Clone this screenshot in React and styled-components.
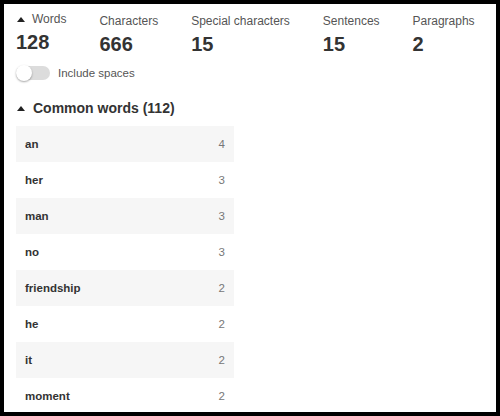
import React from "react";
import styled, { createGlobalStyle } from "styled-components";

const GlobalStyle = createGlobalStyle`
  html, body {
    margin: 0;
    padding: 0;
    background: #000;
  }
  body {
    font-family: "Liberation Sans", Arial, sans-serif;
  }
`

const Frame = styled.div`
  box-sizing: border-box;
  width: 500px;
  height: 416px;
  border: 4px solid #000;
  background: #fff;
  overflow: hidden;
  padding: 9px 12px 0 12px;
  color: #333;
`

const Stats = styled.div`
  display: flex;
  gap: 33px;
`

const Stat = styled.div`
  display: flex;
  flex-direction: column;
  margin-top: ${props => (props.raised ? "-2px" : "0")};
`

const StatLabel = styled.div`
  display: flex;
  align-items: center;
  gap: 7px;
  font-size: 12px;
  line-height: 16px;
  color: #555;
  padding-left: ${props => (props.indent ? "1px" : "0")};
`

const StatValue = styled.div`
  font-size: 20px;
  font-weight: 700;
  line-height: 24px;
  margin-top: 3px;
  color: #333;
`

const ToggleRow = styled.label`
  display: flex;
  align-items: center;
  gap: 8px;
  margin-top: 10px;
  font-size: 11.5px;
  color: #555;
`

const Track = styled.span`
  position: relative;
  display: inline-block;
  width: 34px;
  height: 14px;
  border-radius: 7px;
  background: #dcdcdc;
`

const Knob = styled.span`
  position: absolute;
  top: -1px;
  left: 0;
  width: 16px;
  height: 16px;
  border-radius: 50%;
  background: #fff;
  box-shadow: 0 1px 2px rgba(0, 0, 0, 0.35);
`

const SectionTitle = styled.div`
  display: flex;
  align-items: center;
  gap: 8px;
  margin-top: 20px;
  padding-left: 1px;
  font-size: 14px;
  font-weight: 700;
  color: #333;
`

const Table = styled.div`
  width: 218px;
  margin-top: 10px;
`

const Row = styled.div`
  display: flex;
  justify-content: space-between;
  align-items: center;
  height: 36px;
  padding: 0 9px;
  background: ${props => (props.shaded ? "#f6f6f6" : "#fff")};
  font-size: 11.5px;
`

const Word = styled.span`
  font-weight: 700;
  color: #333;
`

const Count = styled.span`
  color: #777;
`

function Caret() {
  return (
    <svg width="8" height="5" viewBox="0 0 8 5">
      <polygon points="0,5 8,5 4,0" fill="#222" />
    </svg>
  );
}

const stats = [
  { label: "Words", value: 128, caret: true },
  { label: "Characters", value: 666 },
  { label: "Special characters", value: 15 },
  { label: "Sentences", value: 15 },
  { label: "Paragraphs", value: 2 },
];

const words = [
  ["an", 4],
  ["her", 3],
  ["man", 3],
  ["no", 3],
  ["friendship", 2],
  ["he", 2],
  ["it", 2],
  ["moment", 2],
];

export default function App() {
  return (
    <>
      <GlobalStyle />
      <Frame>
        <Stats>
          {stats.map(s => (
            <Stat key={s.label} raised={s.caret}>
              <StatLabel indent={s.caret}>
                {s.caret && <Caret />}
                {s.label}
              </StatLabel>
              <StatValue>{s.value}</StatValue>
            </Stat>
          ))}
        </Stats>

        <ToggleRow>
          <Track>
            <Knob />
          </Track>
          Include spaces
        </ToggleRow>

        <SectionTitle>
          <Caret />
          Common words (112)
        </SectionTitle>

        <Table>
          {words.map(([w, n], i) => (
            <Row key={w} shaded={i % 2 === 0}>
              <Word>{w}</Word>
              <Count>{n}</Count>
            </Row>
          ))}
        </Table>
      </Frame>
    </>
  );
}
